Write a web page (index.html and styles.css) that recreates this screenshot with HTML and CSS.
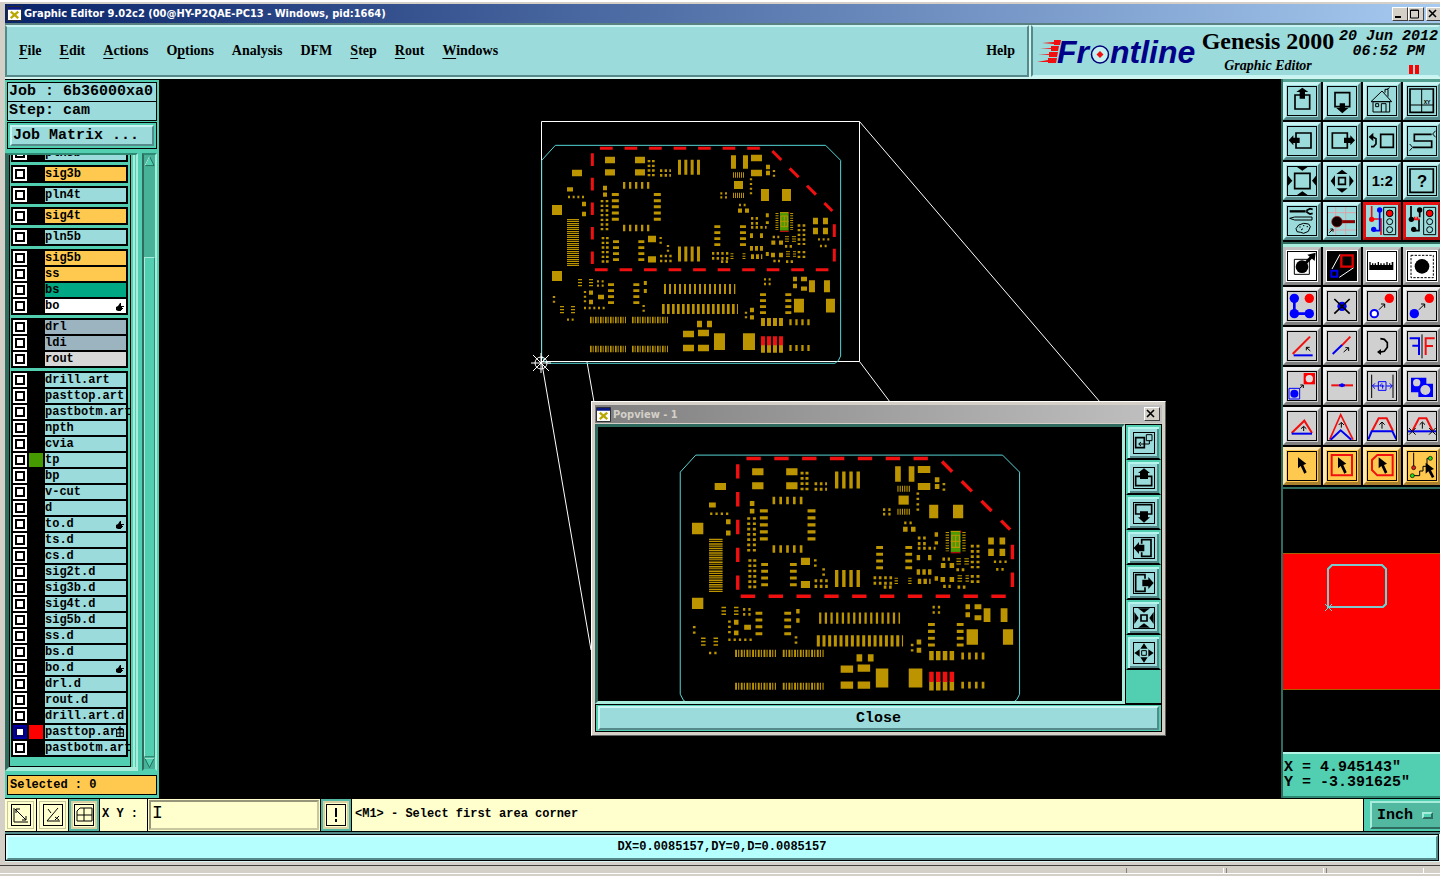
FILE: index.html
```html
<!DOCTYPE html>
<html lang="en">

<head>
    <meta charset="UTF-8">
    <meta name="viewport" content="width=device-width, initial-scale=1.0">
    <title>Graphic Editor 9.02c2</title>
    <link rel="stylesheet" href="styles.css">
</head>

<body>
    <div class="window">
        <!-- Title bar -->
        <header class="title-bar">
            <svg class="app-icon" viewBox="0 0 16 16"><path fill="#fff" stroke="#222" d="M.5.5h15v15H.5z"/><path fill="#0a1a80" d="M1 1h14v3H1z"/><path stroke="#b8a800" stroke-width="2.5" d="M4 6l8 7M12 6l-8 7"/></svg>
            <h1 class="title">Graphic Editor 9.02c2 (00@HY-P2QAE-PC13 - Windows, pid:1664)</h1>
            <div class="win-buttons">
                <button type="button" class="win-btn" aria-label="Minimize"><svg viewBox="0 0 12 10"><path d="M2 8h6" stroke="#000" stroke-width="2"/></svg></button>
                <button type="button" class="win-btn" aria-label="Maximize"><svg viewBox="0 0 12 10"><path d="M1.5 1v8h8V1zM1 1.5h9" fill="none" stroke="#000"/></svg></button>
                <button type="button" class="win-btn win-close" aria-label="Close window"><svg viewBox="0 0 12 10"><path d="M2 1l7 7M9 1L2 8" stroke="#000" stroke-width="1.6"/></svg></button>
            </div>
        </header>

        <!-- Menu and logo -->
        <div class="header">
            <nav class="menu">
                <a href="#"><u>F</u>ile</a>
                <a href="#"><u>E</u>dit</a>
                <a href="#"><u>A</u>ctions</a>
                <a href="#">O<u>p</u>tions</a>
                <a href="#">Analysis</a>
                <a href="#">DFM</a>
                <a href="#"><u>S</u>tep</a>
                <a href="#"><u>R</u>out</a>
                <a href="#"><u>W</u>indows</a>
                <a href="#" class="help">Help</a>
            </nav>
            <div class="brand">
                <svg class="logo" viewBox="0 3 162 40" role="img" aria-label="Frontline">
                    <path fill="#f01010" d="M5 15l12-1V12h7l-1 5h-6v-1zM3 21l11-1V18h8l-1 5h-7v-2zM1 27l11-1V24h9l-1 5h-8v-2zM0 34l11-2V30h9l-1 5h-8v-1z"/>
                    <g class="logo-text">
                        <text x="20" y="35">Fr</text>
                        <text x="73" y="35">ntline</text>
                    </g>
                    <circle cx="63" cy="26.500" r="8.500" fill="#c5f0f0" stroke="#000078" stroke-width="1.500"/>
                    <path fill="#f01010" d="M63 23l3.500 3.500-3.500 3.500-3.500-3.500z"/>
                </svg>
                <div class="product">
                    <strong>Genesis 2000</strong>
                    <em>Graphic Editor</em>
                </div>
                <div class="clock">
                    <span>20 Jun 2012</span>
                    <span>06:52 PM</span>
                    <i class="pause"></i>
                </div>
            </div>
        </div>

        <main class="workspace">
            <!-- Job and layers -->
            <aside class="sidebar">
                <div class="job-line">Job : 6b36000xa0</div>
                <div class="job-line job-step">Step: cam</div>
                <div class="matrix"><button type="button" class="matrix-btn">Job Matrix ...</button></div>

                <div class="layers">
                    <div class="layer-frame">
                        <div class="layer-list">
                            <div class="group">
                                <label class="layer"><input type="checkbox"><i></i><span>pln3b</span></label>
                            </div>
                            <div class="group">
                                <label class="layer signal"><input type="checkbox"><i></i><span>sig3b</span></label>
                            </div>
                            <div class="group">
                                <label class="layer"><input type="checkbox"><i></i><span>pln4t</span></label>
                            </div>
                            <div class="group">
                                <label class="layer signal"><input type="checkbox"><i></i><span>sig4t</span></label>
                            </div>
                            <div class="group">
                                <label class="layer"><input type="checkbox"><i></i><span>pln5b</span></label>
                            </div>
                            <div class="group">
                                <label class="layer signal"><input type="checkbox"><i></i><span>sig5b</span></label>
                                <label class="layer signal"><input type="checkbox"><i></i><span>ss</span></label>
                                <label class="layer mask"><input type="checkbox"><i></i><span>bs</span></label>
                                <label class="layer silk"><input type="checkbox"><i></i><span>bo</span><svg class="hand"><use href="#hand"/></svg></label>
                            </div>
                            <div class="group">
                                <label class="layer drill"><input type="checkbox"><i></i><span>drl</span></label>
                                <label class="layer drill"><input type="checkbox"><i></i><span>ldi</span></label>
                                <label class="layer rout"><input type="checkbox"><i></i><span>rout</span></label>
                            </div>
                            <div class="group">
                                <label class="layer"><input type="checkbox"><i></i><span>drill.art</span></label>
                                <label class="layer"><input type="checkbox"><i></i><span>pasttop.art</span></label>
                                <label class="layer"><input type="checkbox"><i></i><span>pastbotm.art</span></label>
                                <label class="layer"><input type="checkbox"><i></i><span>npth</span></label>
                                <label class="layer"><input type="checkbox"><i></i><span>cvia</span></label>
                                <label class="layer"><input type="checkbox"><i class="green"></i><span>tp</span></label>
                                <label class="layer"><input type="checkbox"><i></i><span>bp</span></label>
                                <label class="layer"><input type="checkbox"><i></i><span>v-cut</span></label>
                                <label class="layer"><input type="checkbox"><i></i><span>d</span></label>
                                <label class="layer"><input type="checkbox"><i></i><span>to.d</span><svg class="hand"><use href="#hand"/></svg></label>
                                <label class="layer"><input type="checkbox"><i></i><span>ts.d</span></label>
                                <label class="layer"><input type="checkbox"><i></i><span>cs.d</span></label>
                                <label class="layer"><input type="checkbox"><i></i><span>sig2t.d</span></label>
                                <label class="layer"><input type="checkbox"><i></i><span>sig3b.d</span></label>
                                <label class="layer"><input type="checkbox"><i></i><span>sig4t.d</span></label>
                                <label class="layer"><input type="checkbox"><i></i><span>sig5b.d</span></label>
                                <label class="layer"><input type="checkbox"><i></i><span>ss.d</span></label>
                                <label class="layer"><input type="checkbox"><i></i><span>bs.d</span></label>
                                <label class="layer"><input type="checkbox"><i></i><span>bo.d</span><svg class="hand"><use href="#hand"/></svg></label>
                                <label class="layer"><input type="checkbox"><i></i><span>drl.d</span></label>
                                <label class="layer"><input type="checkbox"><i></i><span>rout.d</span></label>
                                <label class="layer"><input type="checkbox"><i></i><span>drill.art.d</span></label>
                                <label class="layer"><input type="checkbox" checked><i class="red"></i><span>pasttop.art</span><svg class="grid-mark" viewBox="0 0 7 7"><path fill="#9bdbdb" stroke="#000" d="M.5.5h6v6h-6zM3.500 0v7M0 3.500h7"/></svg></label>
                                <label class="layer"><input type="checkbox"><i></i><span>pastbotm.art</span></label>
                            </div>
                        </div>
                        <div class="sash"></div>
                    </div>
                    <div class="scrollbar">
                        <svg viewBox="0 0 12 12"><path fill="#52cfb1" stroke="#1f6b58" d="M6 1l5 10H1z"/><path stroke="#b5f5e5" d="M6 1L1 11"/></svg>
                        <div class="trough"></div>
                        <div class="thumb"></div>
                        <svg viewBox="0 0 12 12"><path fill="#52cfb1" stroke="#1f6b58" d="M1 1h10L6 11z"/><path stroke="#b5f5e5" d="M1 1h10"/></svg>
                    </div>
                </div>

                <div class="selected">Selected : 0</div>
            </aside>

            <!-- Drawing area -->
            <section class="canvas">
                <svg class="drawing">
                    <defs>
                        <symbol id="hand" viewBox="0 0 8 8"><path d="M0 4l2-1 2-3h1v3h3v1H6v1h1v1H6v1H5v1H2L0 7z"/></symbol>
                        <g id="board" fill="none">
                            <path class="outline" d="M35 151L76 106H887L932 151V738L925 752L915 760H55L44 755L35 738Z"/>
                            <g stroke="#bb9400">
                                <!-- large pads -->
                                <path stroke-width="50" d="M552 695h33M639 695h36"/>
                                <path stroke-width="41" d="M603 156h15M639 156h15M792 587h30M888 587h27"/>
                                <path stroke-width="36" d="M693 255h24M756 255h27M837 529h18M882 529h18"/>
                                <path stroke-width="30" d="M66 300h30M66 498h30"/>
                                <path stroke-width="24" d="M612 225h27"/>
                                <path stroke-width="19" d="M225 150h30M315 150h30M225 187h30M315 187h30M126 189h30M663 144h33M663 189h33M459 672h33M504 669h33M459 714h33M504 714h33M354 387h24M354 448h24M501 642h15M531 642h15M849 333h15M879 333h15M849 363h15M879 363h15"/>
                                <path stroke-width="13" d="M111 238h18M156 282h12M156 312h12M219 234h12M219 254h12M624 302h12M645 302h12M708 171h12M708 189h12M813 507h18M813 536h18M789 507h12M789 528h12M177 548h12M177 576h12M204 561h18M660 600h12M660 622h12M724 398h12M747 398h12M723 435h12M747 435h12"/>
                                <!-- connectors -->
                                <path stroke-width="36" stroke-dasharray="4 2 3 3" d="M129 327V471"/>
                                <path stroke-width="45" stroke-dasharray="9 10" d="M444 172H511M444 432H511"/>
                                <path stroke-width="30" stroke-dasharray="6 9" d="M402 537H616"/>
                                <path stroke-width="30" stroke-dasharray="8 7" d="M396 597H624"/>
                                <path stroke-width="19" stroke-dasharray="5 3 3 4" d="M180 630H288M306 630H414M180 717H288M306 717H414"/>
                                <path stroke-width="24" stroke-dasharray="12 6" d="M693 636H760M693 716H760"/>
                                <path stroke-width="18" stroke-dasharray="7 11" d="M778 637H840M778 714H840"/>
                                <!-- chip pins -->
                                <path stroke-width="21" stroke-dasharray="9 9.500" d="M256 249V334M382 249V334"/>
                                <path stroke-width="20" stroke-dasharray="7 11" d="M279 226H360M279 354H360"/>
                                <path stroke-width="18" stroke-dasharray="8 10" d="M258 391V454M334 391V454M243 520V582M319 520V582M562 346V411M639 346V411M699 550V614M775 550V614"/>
                                <path stroke-width="16" stroke-dasharray="3 3" d="M609 195H642M609 256H642"/>
                                <path stroke-width="12" stroke-dasharray="4 5" d="M150 507V530M183 507V530M96 588V612M129 588V612"/>
                                <path stroke-width="14" stroke-dasharray="9 6" d="M660 415H700M663 440H697"/>
                                <path stroke-width="14" stroke-dasharray="9 21" d="M660 377H700"/>
                                <path stroke-width="9" stroke-dasharray="3 4" d="M606 430V450M642 430V450M741 309V360M785 309V360"/>
                                <path stroke-width="3" stroke-dasharray="12 9" d="M765 380H798M765 387H798M765 394H798M768 425H798M768 432H798M768 439H798"/>
                                <path stroke-width="9" stroke-dasharray="12 12" d="M346 513V549M712 310V342M712 426V446"/>
                                <!-- small parts -->
                                <path stroke-width="8" stroke-dasharray="7 7" d="M216 270V363M231 270V363M219 381V459M232 381V459M357 150V201M370 150V201M390 182H423M390 196H423M390 438H426M390 453H426M807 343V405M822 343V405M807 423V445M822 423V445M546 430H600M546 445H600M573 455H597M663 352H710M663 325H684M663 340H684M765 409H790M768 455H792M728 381H748M730 453H750"/>
                                <path stroke-width="7" stroke-dasharray="6 8" d="M114 261H165M392 381V403M414 405V430M571 250H591M571 262H591M627 285H651M663 205V256M732 180V201M864 388H898M870 408H890M165 543V582M162 594H225M201 514H222M201 527H222M341 585V606M72 558V579M111 629H132M702 508H723M702 522H723M648 605V628"/>
                            </g>
                            <!-- selected parts -->
                            <path fill="#4a9a00" d="M750 306h26v56h-26z"/>
                            <path stroke="#bb9400" stroke-width="3" d="M750 308h26M763 318V350M750 334h26M753 318h20v32h-20z"/>
                            <path stroke="#e01010" stroke-width="3" d="M750 364h26M776 306v5"/>
                            <path stroke="#f01010" stroke-width="27" stroke-dasharray="12 6" d="M693 692H760"/>
                            <!-- profile -->
                            <path stroke="#f01010" stroke-width="9" stroke-dasharray="38 35.600" d="M210 115H690M187 130V462M195 479H897M913 343V456M727 123L907 303"/>
                        </g>
                    </defs>
                    <path class="white-line" d="M382.500 283V42.500H700.500V282.500H382.500M700.500 42.500L941 323M700.500 282.500L731 323M383 285L432 571M428 283L435 323"/>
                    <use href="#board" transform="translate(371 31) scale(.3333)"/>
                    <g class="white-line">
                        <circle cx="382" cy="284" r="6"/>
                        <path d="M372 284h20M382 274v20M374 276l16 16M390 276l-16 16"/>
                    </g>
                </svg>

                <div class="popview">
                    <div class="pop-title">
                        <svg class="app-icon" viewBox="0 0 16 16"><path fill="#fff" stroke="#222" d="M.5.5h15v15H.5z"/><path fill="#0a1a80" d="M1 1h14v3H1z"/><path stroke="#b8a800" stroke-width="2.500" d="M4 6l8 7M12 6l-8 7"/></svg>
                        <h2>Popview - 1</h2>
                        <button type="button" class="win-btn" aria-label="Close popview"><svg viewBox="0 0 12 10"><path d="M2 1l7 7M9 1L2 8" stroke="#000" stroke-width="1.600"/></svg></button>
                    </div>
                    <div class="pop-body">
                        <div class="pop-view">
                            <svg><use href="#board" transform="translate(69 -12) scale(.3783)"/></svg>
                        </div>
                        <div class="pop-tools">
                            <button type="button" aria-label="Copy view"><svg viewBox="0 0 66 66"><path class="thick" d="M8 17h26v30H8z"/><path class="line" d="M40 8h17v18H40zM49 26v10H18M24 30l-7 6 7 6"/></svg></button>
                            <button type="button" aria-label="Pan up"><svg viewBox="0 0 66 66"><path class="thick" d="M22 28H8v28h48V28H44"/><path d="M33 4l18 14h-6v18H21V18h-6z"/></svg></button>
                            <button type="button" aria-label="Pan down"><svg viewBox="0 0 66 66"><path class="thick" d="M22 36H8V8h48v28H44"/><path d="M33 62l18-16h-6V28H21v18h-6z"/></svg></button>
                            <button type="button" aria-label="Pan left"><svg viewBox="0 0 66 66"><path class="thick" d="M26 20V8h28v50H26V46"/><path d="M2 33l16-18v8h16v20H18v8z"/></svg></button>
                            <button type="button" aria-label="Pan right"><svg viewBox="0 0 66 66"><path class="thick" d="M36 20V8H8v50h28V46"/><path d="M62 33L46 15v8H28v20h18v8z"/></svg></button>
                            <button type="button" aria-label="Zoom in"><svg viewBox="0 0 66 66"><path class="thick" d="M24 24h18v18H24z"/><path d="M15 4h36L33 17zM15 62h36L33 49zM4 15v36l13-18zM62 15v36L49 33z"/></svg></button>
                            <button type="button" aria-label="Zoom out"><svg viewBox="0 0 66 66"><path class="line" d="M26 26h14v14H26z"/><path d="M22 20h22L33 4zM22 46h22L33 62zM20 22v22L4 33zM46 22v22l16-11z"/></svg></button>
                        </div>
                    </div>
                    <div class="pop-footer"><button type="button">Close</button></div>
                </div>
            </section>

            <!-- Tools -->
            <aside class="tools">
                <div class="tool-grid view-tools">
                    <button type="button" aria-label="Pan up"><svg viewBox="0 0 90 90"><path class="thick" d="M24 27h44v42H24z"/><path d="M46 5l18 13H54v20H38V18H28z"/></svg></button>
                    <button type="button" aria-label="Pan down"><svg viewBox="0 0 90 90"><path class="thick" d="M24 20h44v42H24z"/><path d="M38 52h16v14h10L46 82 28 66h10z"/></svg></button>
                    <button type="button" aria-label="Home"><svg viewBox="0 0 90 90"><path class="line" d="M12 47l33-32 29 32zM18 47h50v31H18zM43 78V53h14v25M26 53h9v9h-9zM54 20V10h9v22M60 10l8-5"/></svg></button>
                    <button type="button" aria-label="Zoom to point"><svg viewBox="0 0 90 90"><path class="thick" d="M9 9h70v70H9z"/><path class="line" d="M44 9v70M9 57h70"/><text x="50" y="53" class="xy">XY</text></svg></button>

                    <button type="button" aria-label="Pan left"><svg viewBox="0 0 90 90"><path class="thick" d="M27 21h45v45H27z"/><path d="M5 43l14-15v7h19v16H19v7z"/></svg></button>
                    <button type="button" aria-label="Pan right"><svg viewBox="0 0 90 90"><path class="thick" d="M16 21h45v45H16z"/><path d="M84 43L70 28v7H51v16h19v7z"/></svg></button>
                    <button type="button" aria-label="Previous view"><svg viewBox="0 0 90 90"><path class="thick" d="M41 25h38v39H41zM12 62h8l7-8V38l-9-5h-5"/><path d="M5 33l14-13v26z"/></svg></button>
                    <button type="button" aria-label="Trace"><svg viewBox="0 0 90 90"><path class="thick" d="M74 25H22v20h52v19H18"/><path class="line" d="M86 14l-9 10 9 10M8 54l9 10-9 10"/></svg></button>

                    <button type="button" aria-label="Zoom in"><svg viewBox="0 0 90 90"><path class="thick" d="M23 22h46v46H23z"/><path d="M30 3h32L46 14zM30 87h32L46 76zM2 28v32l14-16zM88 28v32L75 44z"/></svg></button>
                    <button type="button" aria-label="Zoom out"><svg viewBox="0 0 90 90"><path class="thick" d="M35 35h20v20H35z"/><path d="M28 24h34L45 11zM28 67h34L45 80zM24 28v34L11 45zM67 28v34l13-17z"/></svg></button>
                    <button type="button" aria-label="Zoom 1:2"><svg viewBox="0 0 90 90"><text x="14" y="60" class="ratio">1:2</text></svg></button>
                    <button type="button" aria-label="Query"><svg viewBox="0 0 90 90"><path class="thick" d="M9 9h70v70H9z"/><text x="30" y="62" class="query">?</text></svg></button>

                    <button type="button" aria-label="Setup"><svg viewBox="0 0 90 90"><path stroke="#000" stroke-width="7" d="M8 16h48"/><path class="thick" d="M77 10l-8-2-9 5v6l9 5 8-2"/><path class="line" d="M8 37l15-4h52v9H23zM30 77l-3-9 8-11 15-5 15 2 5 8-6 14-14 6-9-3zM37 63h4M48 59h4M59 62h4M42 72l6-4"/></svg></button>
                    <button type="button" aria-label="Highlight net"><svg viewBox="0 0 90 90"><path fill="none" stroke="#e0a0a8" stroke-width="3" d="M26 1v88M56 1v88M1 20h88M1 72h88"/><path stroke="#800" stroke-width="9" d="M42 47h42"/><circle cx="30" cy="47" r="16" fill="#100" stroke="#c02020" stroke-width="2"/><path class="line" d="M7 80l10-10M10 69h8v8"/></svg></button>
                    <button type="button" class="alert" aria-label="Net compare"><svg viewBox="0 0 90 90"><path class="thick red" d="M14 0v39h28v48"/><path class="thick blue" d="M38 12v62H20"/><circle cx="14" cy="40" r="8" fill="#f00"/><circle cx="38" cy="12" r="8" fill="#00f"/><circle cx="20" cy="70" r="8" fill="#00f"/><path class="line" d="M50 4h36v82H50z"/><circle cx="68" cy="22" r="10" fill="#f00" stroke="#000" stroke-width="3"/><circle class="line" cx="68" cy="47" r="9"/><circle class="line" cx="68" cy="71" r="9"/></svg></button>
                    <button type="button" class="alert" aria-label="Net check"><svg viewBox="0 0 90 90"><path class="thick" d="M12 0v39M38 12v22M36 40v34H20"/><path class="thick red" d="M14 40h24M23 32v8M31 32v8"/><circle cx="13" cy="40" r="8"/><circle cx="38" cy="12" r="8"/><circle cx="20" cy="70" r="8"/><path class="line" d="M50 4h36v82H50z"/><circle cx="68" cy="22" r="10" fill="#f00" stroke="#000" stroke-width="3"/><circle class="line" cx="68" cy="47" r="9"/><circle class="line" cx="68" cy="71" r="9"/></svg></button>
                </div>

                <div class="tool-grid edit-tools">
                    <button type="button" class="paper" aria-label="Select feature"><svg viewBox="0 0 90 90"><path class="line" d="M22 25h45v45H22z"/><circle cx="45" cy="47" r="19"/><path stroke="#000" stroke-width="9" d="M56 36l18-19"/><path d="M61 11l25-6-3 25z"/></svg></button>
                    <button type="button" class="paper" aria-label="Popview"><svg viewBox="0 0 90 90"><path d="M3 3h84v84H3z"/><path fill="none" stroke="#fff" stroke-width="3" d="M15 54L39 10M37 79l43-29"/><path fill="none" stroke="#e00000" stroke-width="7" d="M43 13h34v34H43z"/><path fill="none" stroke="#0000f0" stroke-width="6" d="M13 59h18v18H13z"/></svg></button>
                    <button type="button" class="paper" aria-label="Measure"><svg viewBox="0 0 90 90"><path d="M7 33h4v9h4v-5h4v5h4v-5h4v5h5v-9h4v9h4v-5h4v5h5v-5h4v5h5v-9h4v9h4v-5h4v5h4v-9h5v24H7z"/></svg></button>
                    <button type="button" class="paper" aria-label="Select area"><svg viewBox="0 0 90 90"><path class="line" stroke-dasharray="7 4" d="M12 13h67v67H12z"/><circle cx="45" cy="46" r="22"/></svg></button>

                    <button type="button" aria-label="Connect"><svg viewBox="0 0 90 90"><path fill="none" stroke="#00f" stroke-width="8" d="M22 22v46h45"/><circle cx="22" cy="22" r="14" fill="#00f"/><circle cx="22" cy="68" r="14" fill="#00f"/><circle cx="67" cy="68" r="14" fill="#00f"/><circle cx="67" cy="22" r="14" fill="#f00"/></svg></button>
                    <button type="button" aria-label="Delete"><svg viewBox="0 0 90 90"><circle cx="45" cy="46" r="14" fill="#00f"/><path stroke="#000" stroke-width="5" d="M22 24l46 44M68 24L22 68"/></svg></button>
                    <button type="button" aria-label="Move"><svg viewBox="0 0 90 90"><circle cx="67" cy="22" r="14" fill="#f00"/><circle cx="22" cy="68" r="11" fill="#fff" stroke="#00f" stroke-width="6"/><path class="line" d="M36 56l16-16M42 39h11v11"/></svg></button>
                    <button type="button" aria-label="Copy"><svg viewBox="0 0 90 90"><circle cx="67" cy="22" r="14" fill="#f00"/><circle cx="22" cy="68" r="14" fill="#00f"/><path class="line" d="M36 56l16-16M42 39h11v11"/></svg></button>

                    <button type="button" aria-label="Rotate"><svg viewBox="0 0 90 90"><path class="bold red" d="M17 69l52-52"/><path class="bold blue" d="M20 73h57"/><path class="line" d="M70 60L58 49M58 58v-9h10"/></svg></button>
                    <button type="button" aria-label="Stretch"><svg viewBox="0 0 90 90"><path class="bold red" d="M44 44l26-27"/><path class="bold blue" d="M17 69l28-27"/><path class="line" d="M50 63l14-12M55 50h10v10"/></svg></button>
                    <button type="button" aria-label="Rotate angle"><svg viewBox="0 0 90 90"><path class="thick" d="M40 23l12 2 9 10v14l-9 12-17 3"/><path d="M30 63l12-9v18z"/></svg></button>
                    <button type="button" aria-label="Mirror"><svg viewBox="0 0 90 90"><path class="bold blue" d="M8 22h28v50M16 44h20"/><path class="bold red" d="M83 22H56v50M56 45h22"/><path class="line" d="M45 10v72"/></svg></button>

                    <button type="button" aria-label="Transform"><svg viewBox="0 0 90 90"><path fill="#f00" d="M50 6h34v34H50z"/><circle cx="67" cy="23" r="11" fill="#e0e0e0"/><path fill="none" stroke="#00f" stroke-width="3" d="M6 52h32v32H6z"/><circle cx="22" cy="68" r="12" fill="#00f"/><path class="line" d="M38 52l10-9M40 42h9v9"/></svg></button>
                    <button type="button" aria-label="Break"><svg viewBox="0 0 90 90"><path class="bold red" d="M13 43h65"/><path class="bold blue" d="M36 43h18"/><circle cx="45" cy="43" r="6" fill="#00f"/></svg></button>
                    <button type="button" aria-label="Resize"><svg viewBox="0 0 90 90"><path class="line" d="M14 11v70M78 11v70"/><path fill="none" stroke="#00f" stroke-width="3" d="M17 45h17M58 45h17M24 37l-8 8 8 8M68 37l8 8-8 8M34 32h23v26H34zM45 37l-7 8h14M47 41v12"/></svg></button>
                    <button type="button" aria-label="Change shape"><svg viewBox="0 0 90 90"><path fill="#00f" d="M12 20h46v18h20v40H34V64H12z"/><circle cx="29" cy="35" r="11" fill="#d0d0d0"/><circle cx="55" cy="57" r="15" fill="#d0d0d0"/></svg></button>

                    <button type="button" aria-label="Extend"><svg viewBox="0 0 90 90"><path class="bold red" d="M14 66l38-37 23 37"/><path class="bold blue" d="M14 68h61"/><path class="line" d="M50 60V47M42 53l8-7 8 7"/></svg></button>
                    <button type="button" aria-label="Move corner"><svg viewBox="0 0 90 90"><path class="thick red" d="M8 86l33-75 37 75"/><path class="bold blue" d="M11 86l30-28 32 28"/><path class="line" d="M43 50V35M35 42l8-8 8 8"/></svg></button>
                    <button type="button" aria-label="Move segment"><svg viewBox="0 0 90 90"><path class="bold red" d="M15 60l20-38h24l19 38"/><path class="bold blue" d="M4 85l10-24h62l12 24"/><path class="line" d="M45 53V34M37 41l8-8 8 8"/></svg></button>
                    <button type="button" aria-label="Cut segment"><svg viewBox="0 0 90 90"><path class="bold red" d="M16 60l20-38h22l19 38"/><path class="bold blue" d="M3 61h84"/><path class="line" d="M46 53V34M38 41l8-8 8 8M6 51l20 20M26 51L6 71M66 51l20 20M86 51L66 71"/></svg></button>

                    <button type="button" class="pick" aria-label="Pick"><svg viewBox="0 0 90 90"><path d="M33 19l25 19-9 4 10 22-7 4-11-23-8 7z"/></svg></button>
                    <button type="button" class="pick" aria-label="Pick in box"><svg viewBox="0 0 90 90"><path class="bold red" d="M14 12h61v61H14z"/><path d="M33 19l25 19-9 4 10 22-7 4-11-23-8 7z"/></svg></button>
                    <button type="button" class="pick" aria-label="Pick in polygon"><svg viewBox="0 0 90 90"><path class="bold red" d="M31 12h46v61H31L15 57V27z"/><path d="M35 19l25 19-9 4 10 22-7 4-11-23-8 7z"/></svg></button>
                    <button type="button" class="pick" aria-label="Pick net"><svg viewBox="0 0 90 90"><path class="line" d="M20 5v44M16 74h22V60h10V46h12V22h10"/><circle cx="20" cy="50" r="6" fill="#e02020" stroke="#000" stroke-width="2"/><circle cx="16" cy="74" r="6" fill="#20e020" stroke="#000" stroke-width="2"/><circle cx="70" cy="22" r="6" fill="#20e020" stroke="#000" stroke-width="2"/><path d="M56 35l25 19-9 4 10 19-7 4-11-20-8 7z"/></svg></button>
                </div>

                <div class="overview">
                    <svg>
                        <path fill="#f00" stroke="#a86000" d="M-.5 64.500h170v136H-.5z"/>
                        <path fill="none" stroke="#50e0e0" stroke-width="2" d="M45 80l4-4h50l4 4v35l-3 3H45z"/>
                        <path fill="none" stroke="#b0b0b8" stroke-width="1" d="M45 81v36M49 76h50M47 118h53"/>
                        <path stroke="#50e0e0" d="M42 115l7 7M49 115l-7 7"/>
                    </svg>
                </div>

                <div class="coords">
                    <div>X = 4.945143"</div>
                    <div>Y = -3.391625"</div>
                </div>
            </aside>
        </main>

        <!-- Command line -->
        <div class="command">
            <button type="button" class="cmd-btn" aria-label="Absolute mode"><svg viewBox="0 0 20 20"><path class="line" d="M3 3v14h14M4 4l11 11M5 8V4h4M15 11v4h-4"/></svg></button>
            <button type="button" class="cmd-btn" aria-label="Angle mode"><svg viewBox="0 0 20 20"><path class="line" d="M15 3L4 16h13M5 4l3 4M12 12l4 3M16 11l-4 4"/></svg></button>
            <button type="button" class="cmd-btn raised" aria-label="Grid mode"><svg viewBox="0 0 20 20"><path class="line" d="M6 3h12v13H3V6zM10 3v13M3 10h15"/></svg></button>
            <label class="xy-label" for="xy">X Y :</label>
            <input type="text" id="xy" class="xy-input" value="I">
            <button type="button" class="cmd-btn raised" aria-label="Alert"><svg viewBox="0 0 20 20"><path stroke="#000" stroke-width="2" d="M10 3v9M10 14v3"/></svg></button>
            <div class="message">&lt;M1&gt; - Select first area corner</div>
            <div class="units"><button type="button">Inch <i></i></button></div>
        </div>

        <div class="status"><div class="status-text">DX=0.0085157,DY=0,D=0.0085157</div></div>
        <footer class="desktop-edge"><i></i><i></i><i></i></footer>
    </div>
</body>

</html>
```
FILE: styles.css
```css
* {
    margin: 0;
    padding: 0;
    box-sizing: border-box;
}

body {
    background: #d4d0c8;
    color: #000;
    font-family: "Liberation Mono", monospace;
    font-size: 12px;
    font-weight: bold;
}

button,
input {
    font: inherit;
    color: inherit;
    border-radius: 0;
}

button {
    cursor: pointer;
}

svg {
    display: block;
}

.window {
    display: flex;
    flex-direction: column;
    height: 100vh;
    padding-left: 5px;
    border-top: 2px solid #fff;
    overflow: hidden;
}

/* Title bars */
.title-bar {
    display: flex;
    align-items: center;
    height: 19px;
    flex-shrink: 0;
    margin-top: 2px;
    padding-left: 2px;
    background: linear-gradient(90deg, #0a246a, #a6caf0);
    color: #fff;
}

.app-icon {
    width: 15px;
    height: 15px;
    margin-right: 2px;
}

.title,
.pop-title h2 {
    flex: 1;
    font: bold 11px "DejaVu Sans Condensed", "DejaVu Sans", sans-serif;
}

.win-buttons {
    display: flex;
    margin-right: -2px;
}

.win-btn {
    width: 16px;
    height: 14px;
    background: #d4d0c8;
    border: 1px solid;
    border-color: #fff #404040 #404040 #fff;
}

.win-btn svg {
    width: 12px;
    height: 10px;
}

.win-close {
    margin-left: 2px;
}

/* Header */
.header {
    display: flex;
    height: 56px;
    flex-shrink: 0;
    gap: 2px;
    border-top: 2px solid #5a8080;
    background: #d0f4f0;
}

.menu,
.brand {
    display: flex;
    align-items: center;
    background: #9bdbdb;
    border: 2px solid;
    border-color: #c8f4f4 #568a8a #568a8a #c8f4f4;
    margin-bottom: 2px;
}

.menu {
    flex: 1;
    gap: 18px;
    padding: 0 12px;
    border-left-color: #568a8a;
    font: bold 14px "Liberation Serif", serif;
}

.menu a {
    color: #000;
    text-decoration: none;
}

.menu u {
    text-underline-offset: 3px;
}

.help {
    margin-left: auto;
}

.brand {
    width: 409px;
    padding-left: 4px;
    border-color: #c8f4f4 #9bdbdb #c8f4f4 #568a8a;
}

.logo {
    width: 162px;
    height: 40px;
    flex-shrink: 0;
}

.logo-text {
    font: italic bold 32px "Liberation Sans", sans-serif;
    fill: #000088;
}

.product {
    display: flex;
    flex-direction: column;
    align-items: center;
    width: 138px;
    flex-shrink: 0;
    gap: 3px;
    padding-bottom: 2px;
    font-family: "Liberation Serif", serif;
}

.product strong {
    font-size: 24px;
    line-height: 28px;
    white-space: nowrap;
}

.product em {
    font-size: 14px;
    line-height: 16px;
}

.clock {
    display: flex;
    flex-direction: column;
    align-items: center;
    flex: 1;
    padding-left: 2px;
    font-size: 15px;
    font-style: italic;
    line-height: 15px;
    white-space: nowrap;
}

.pause {
    width: 10px;
    height: 9px;
    margin: 6px 0 0 50px;
    border: solid #f00;
    border-width: 0 4px;
}

/* Workspace */
.workspace {
    display: flex;
    flex: 1;
    min-height: 0;
    background: #000;
}

.sidebar {
    display: flex;
    flex-direction: column;
    width: 154px;
    padding: 2px 2px 3px;
    background: #52cfb1;
    border-top: 1px solid #000;
}

.job-line,
.matrix,
.selected {
    border: 1px solid #000;
}

.job-line {
    height: 20px;
    padding-left: 1px;
    background: #9bdbdb;
    font-size: 15px;
    line-height: 18px;
    white-space: nowrap;
}

.job-step {
    margin-top: -1px;
}

.matrix {
    margin-top: 1px;
    padding: 2px;
}

.matrix-btn {
    display: block;
    width: 100%;
    height: 21px;
    padding-left: 1px;
    background: #9bdbdb;
    border: 2px solid;
    border-color: #c8f4f4 #568a8a #568a8a #c8f4f4;
    font-size: 15px;
    line-height: 17px;
    text-align: left;
}

.layers {
    display: flex;
    flex: 1;
    min-height: 0;
    gap: 4px;
    margin: 4px 0;
}

.layer-frame {
    display: flex;
    flex: 1;
    margin-left: -2px;
    border: solid;
    border-width: 2px 2px 4px 4px;
    border-color: #2f8a74 #a8ecdc #a8ecdc #2f6b5f;
}

.layer-list {
    display: flex;
    flex-direction: column;
    justify-content: flex-end;
    width: 122px;
    gap: 3px;
    padding: 0 2px 9px 1px;
    border: 1px solid #000;
    border-top: 0;
    overflow: hidden;
}

.sash {
    width: 4px;
    border-right: 2px solid #a8ecdc;
}

.group {
    display: flex;
    flex-direction: column;
    flex-shrink: 0;
    gap: 2px;
    padding: 2px;
    background: #000;
}

.layer {
    display: flex;
    align-items: center;
    gap: 2px;
    height: 14px;
    position: relative;
}

.layer input {
    appearance: none;
    width: 14px;
    height: 14px;
    border: 2px solid #fff;
    background: #fff;
    box-shadow: inset 0 0 0 2px #000;
}

.layer input:checked {
    border-color: #0000a8;
    box-shadow: inset 0 0 0 2px #000070;
}

.layer i {
    width: 14px;
    height: 14px;
}

.layer .green {
    background: #459a00;
}

.layer .red {
    background: #f00;
}

.layer span {
    flex: 1;
    min-width: 0;
    height: 14px;
    background: #9bdbdb;
    line-height: 14px;
    white-space: nowrap;
}

.signal span {
    background: #ffc84f;
}

.layer.mask span {
    background: #00a884;
}

.silk span {
    background: #fff;
}

.drill span {
    background: #9cb4c0;
}

.rout span {
    background: #d8d8d8;
}

/* Marks drawn over the layer name */
.hand,
.grid-mark {
    position: absolute;
    right: 2px;
    top: 4px;
    width: 8px;
    height: 8px;
}

.scrollbar {
    display: flex;
    flex-direction: column;
    width: 15px;
    border: 2px solid;
    border-color: #2f8a74 #a8ecdc #52cfb1 #2f6b5f;
    background: #47b297;
}

.scrollbar svg {
    width: 11px;
    height: 12px;
    fill: none;
}

.trough {
    flex: 90;
}

.thumb {
    flex: 499;
    background: #52cfb1;
    border: 1px solid;
    border-color: #a8ecdc #2f8a74 #2f8a74 #a8ecdc;
}

.selected {
    height: 20px;
    padding-left: 2px;
    background: #ffc84f;
    line-height: 18px;
}

/* Drawing area */
.canvas {
    flex: 1;
    min-width: 0;
    position: relative;
    overflow: hidden;
}

.drawing,
.pop-view svg,
.overview svg {
    width: 100%;
    height: 100%;
}

.white-line {
    fill: none;
    stroke: #fff;
}

.outline {
    stroke: #55d5d5;
    stroke-width: 1px;
    vector-effect: non-scaling-stroke;
}

.popview {
    display: flex;
    flex-direction: column;
    position: absolute;
    left: 432px;
    top: 322px;
    width: 575px;
    height: 335px;
    padding: 3px;
    background: #d4d0c8;
    border: 1px solid;
    border-color: #fff #606060 #606060 #fff;
}

.pop-title {
    display: flex;
    align-items: center;
    height: 18px;
    flex-shrink: 0;
    padding: 0 2px 0 1px;
    background: linear-gradient(90deg, #808080, #c0c0c0);
    color: #d4d0c8;
}

.pop-title .win-btn {
    color: #000;
}

.pop-body {
    display: flex;
    flex: 1;
    min-height: 0;
    margin-top: 1px;
}

.pop-view {
    flex: 1;
    background: #000;
    border: 3px solid;
    border-color: #2f6b5f #a8ecdc #a8ecdc #2f6b5f;
    overflow: hidden;
}

.pop-tools {
    display: flex;
    flex-direction: column;
    width: 37px;
    background: #52cfb1;
    border: 1px solid #000;
}

.pop-tools button {
    width: 35px;
    height: 35px;
    padding: 3px;
    background: #9bdbdb;
    border: 2px solid #52cfb1;
    border-bottom-color: #000;
    box-shadow: inset 2px 2px #b5f5ee, inset -2px -2px #568a8a;
}

.pop-tools svg {
    width: 22px;
    height: 22px;
    margin: auto;
    outline: 1px solid #000;
    outline-offset: -1px;
}

.pop-footer {
    height: 28px;
    padding: 1px 2px;
    background: #52cfb1;
    border: 1px solid #000;
}

.pop-footer button {
    display: block;
    width: 100%;
    height: 24px;
    background: #9bdbdb;
    border: 2px solid;
    border-color: #c8f4f4 #568a8a #568a8a #c8f4f4;
    font-size: 15px;
}

/* Tools */
.tools {
    display: flex;
    flex-direction: column;
    width: 159px;
    border-left: 2px solid #2f6b5f;
    overflow: hidden;
}

.tool-grid {
    display: grid;
    grid-template-columns: repeat(4, 38px);
    grid-auto-rows: 38px;
    gap: 2px;
    width: 160px;
    padding-bottom: 2px;
    border-top: 3px solid #52a08f;
    border-bottom: 2px solid #2f6b5f;
}

.edit-tools {
    border-top-color: #a8ecdc;
}

.tool-grid button {
    padding: 1px;
    background: #9bdbdb;
    border: 3px solid;
    border-color: #c8f4f4 #568a8a #568a8a #c8f4f4;
}

.tool-grid svg {
    width: 30px;
    height: 30px;
    outline: 1px solid #000;
    outline-offset: -1px;
}

.tool-grid .alert {
    border-color: #e81010 #b01010 #b01010 #e81010;
}

.tool-grid .alert svg {
    outline: none;
}

.edit-tools button {
    background: #d0d0d0;
    border-color: #f0f0f0 #808080 #808080 #f0f0f0;
}

.edit-tools .paper {
    background: #fff;
    border-color: #c0c0c0 #888 #888 #c0c0c0;
}

.edit-tools .pick {
    background: #ffc84f;
    border-color: #ffe8b0 #a88030 #a88030 #ffe8b0;
}

/* Icon strokes */
.line,
.thick,
.bold {
    fill: none;
    stroke: #000;
    stroke-width: 3px;
}

.thick {
    stroke-width: 5px;
}

.bold {
    stroke-width: 6px;
}

.cmd-btn .line {
    stroke-width: 1px;
}

.thick.red,
.bold.red {
    stroke: #f01010;
}

.thick.blue,
.bold.blue {
    stroke: #0000f0;
}

.xy {
    font-size: 17px;
}

.ratio {
    font: bold 44px "Liberation Sans", sans-serif;
}

.query {
    font: bold 50px "Liberation Sans", sans-serif;
}

.overview {
    flex: 1;
    min-height: 0;
}

.coords {
    height: 46px;
    padding: 6px 1px 0;
    background: #52cfb1;
    border-top: 2px solid #b5f5e5;
    border-bottom: 2px solid #2f8a74;
    font-size: 15px;
    line-height: 15px;
    white-space: nowrap;
}

/* Command line */
.command {
    display: flex;
    height: 34px;
    flex-shrink: 0;
    gap: 1px;
    padding: 1px 0;
    background: #000;
}

.cmd-btn {
    width: 31px;
    padding: 2px;
    background: #ffffce;
    border: 2px solid #ffffce;
    box-shadow: inset 0 0 0 1px #c8c8a0;
}

.cmd-btn svg {
    width: 20px;
    height: 22px;
    margin: auto;
    outline: 1px solid #000;
    outline-offset: -1px;
}

.cmd-btn.raised {
    width: 30px;
    border-color: #52b8a4;
    box-shadow: inset 0 0 0 2px #d8d0a0;
}

.xy-label {
    width: 47px;
    padding-left: 2px;
    background: #ffffce;
    line-height: 31px;
}

.xy-input {
    width: 172px;
    padding: 0 1px 5px;
    background: #ffffce;
    border: 3px solid;
    border-color: #98967a #c8c8a0 #c8c8a0 #98967a;
    outline: 1px solid #ffffce;
    outline-offset: -1px;
    font-weight: normal;
    font-size: 18px;
}

.message {
    flex: 1;
    padding-left: 3px;
    background: #ffffce;
    line-height: 31px;
}

.units {
    width: 76px;
    padding: 2px 0 2px 6px;
    background: #52cfb1;
}

.units button {
    display: flex;
    align-items: center;
    gap: 9px;
    width: 72px;
    height: 28px;
    padding-left: 5px;
    background: #52b8a0;
    border: 2px solid;
    border-color: #a8ecdc #2f6b5f #2f6b5f #a8ecdc;
    font-size: 15px;
}

.units i {
    width: 11px;
    height: 7px;
    background: #52cfb1;
    border: 2px solid;
    border-color: #a8ecdc #2f6b5f #2f6b5f #a8ecdc;
}

/* Status bar */
.status {
    height: 30px;
    flex-shrink: 0;
    padding: 1px 2px 1px 1px;
    background: #d8ffff;
    border-top: 2px solid #568a8a;
    border-bottom: 2px solid #d8f4f4;
}

.status-text {
    height: 25px;
    background: #b5ffff;
    border: 2px solid;
    border-color: #d8ffff #568a8a #568a8a #d8ffff;
    outline: 1px solid #000;
    line-height: 21px;
    text-align: center;
}

.desktop-edge {
    display: flex;
    justify-content: flex-end;
    height: 14px;
    flex-shrink: 0;
    gap: 2px;
    margin-left: -5px;
    padding: 3px 16px 3px 0;
    border-top: 3px solid #d4d0c8;
    background: linear-gradient(#404040 1px, #d4d0c8 1px, #d4d0c8 8px, #fff 8px, #fff 9px, #d4d0c8 9px);
}

.desktop-edge i {
    width: 98px;
    border-left: 1px solid #808080;
    border-right: 1px solid #fff;
}
```
